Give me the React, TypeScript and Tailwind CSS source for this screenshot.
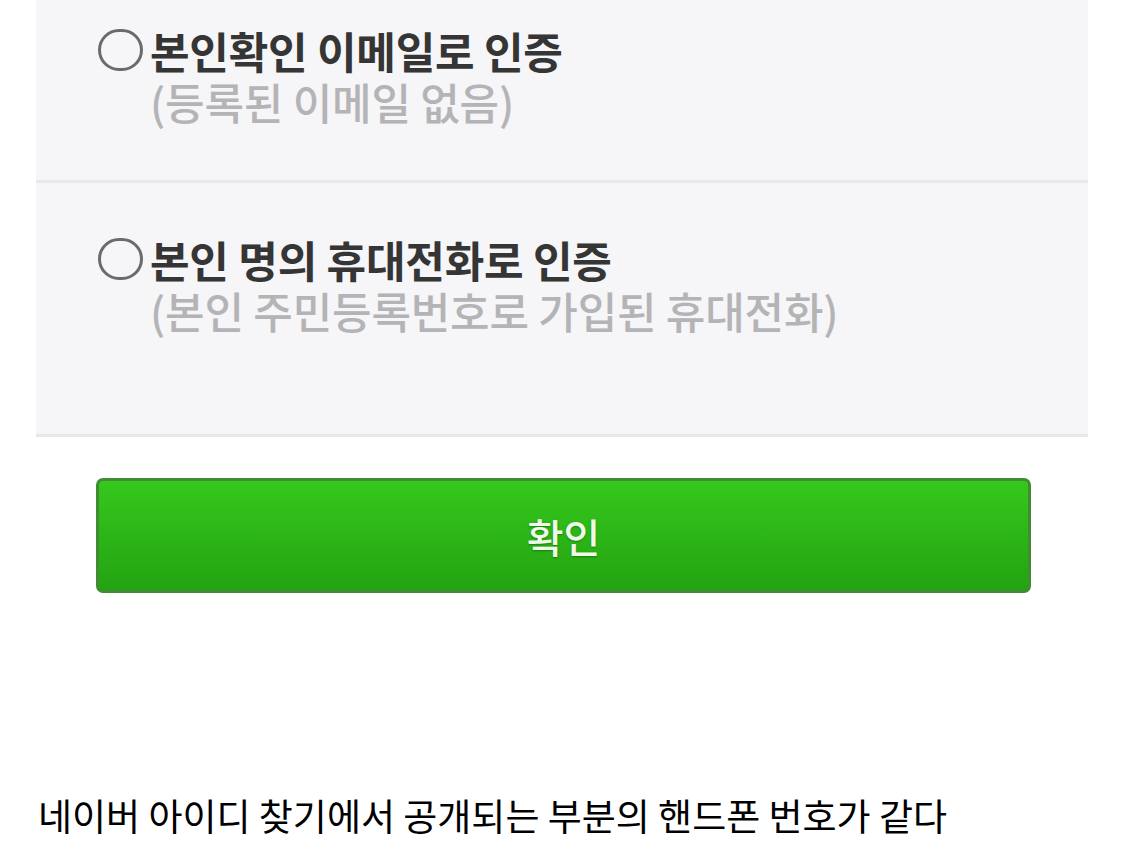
import React from 'react';

const options = [
  { title: '본인확인 이메일로 인증', sub: '(등록된 이메일 없음)' },
  { title: '본인 명의 휴대전화로 인증', sub: '(본인 주민등록번호로 가입된 휴대전화)' },
];

const font = { fontFamily: '"Noto Sans CJK KR", "Noto Sans", sans-serif' };

const Radio: React.FC = () => (
  <span className="mt-[5px] mr-[7px] block h-[42px] w-[45px] shrink-0 rounded-full border-[3px] border-[#6b6b6b]" />
);

export default function App() {
  return (
    <div className="min-h-[858px] w-[1125px] bg-white" style={font}>
      {/* Options panel */}
      <div className="ml-[36px] w-[1052px] bg-[#f6f5f7]">
        <div className="h-[180px] pt-[24px] pl-[62px]">
          <div className="flex">
            <Radio />
            <div>
              <p className="text-[43px] font-bold leading-[52px] tracking-[-0.2px] text-[#353535]">{options[0].title}</p>
              <p className="text-[43px] font-medium leading-[50px] tracking-[-0.2px] text-[#b4b4b6]">{options[0].sub}</p>
            </div>
          </div>
        </div>
        <div className="h-[3px] bg-[#e8e7e9]" />
        <div className="h-[251px] pt-[50px] pl-[62px]">
          <div className="flex">
            <Radio />
            <div>
              <p className="text-[43px] font-bold leading-[52px] tracking-[-0.2px] text-[#353535]">{options[1].title}</p>
              <p className="text-[43px] font-medium leading-[50px] tracking-[-0.2px] text-[#b4b4b6]">{options[1].sub}</p>
            </div>
          </div>
        </div>
        <div className="h-[3px] bg-[#e8e7e9]" />
      </div>

      {/* Confirm button */}
      <div className="pt-[41px] pl-[96px]">
        <button className="flex h-[115px] w-[935px] items-center justify-center rounded-[7px] border-[3px] border-[#3f8c33] bg-gradient-to-b from-[#35c81c] to-[#24a312]">
          <span className="text-[40px] font-medium text-[#eef9e8] [text-shadow:0_1px_2px_rgba(0,60,0,0.45)]">확인</span>
        </button>
      </div>

      {/* Caption */}
      <p className="pt-[198px] pl-[38px] text-[37px] leading-[48px] text-black">
        네이버 아이디 찾기에서 공개되는 부분의 핸드폰 번호가 같다
      </p>
    </div>
  );
}
